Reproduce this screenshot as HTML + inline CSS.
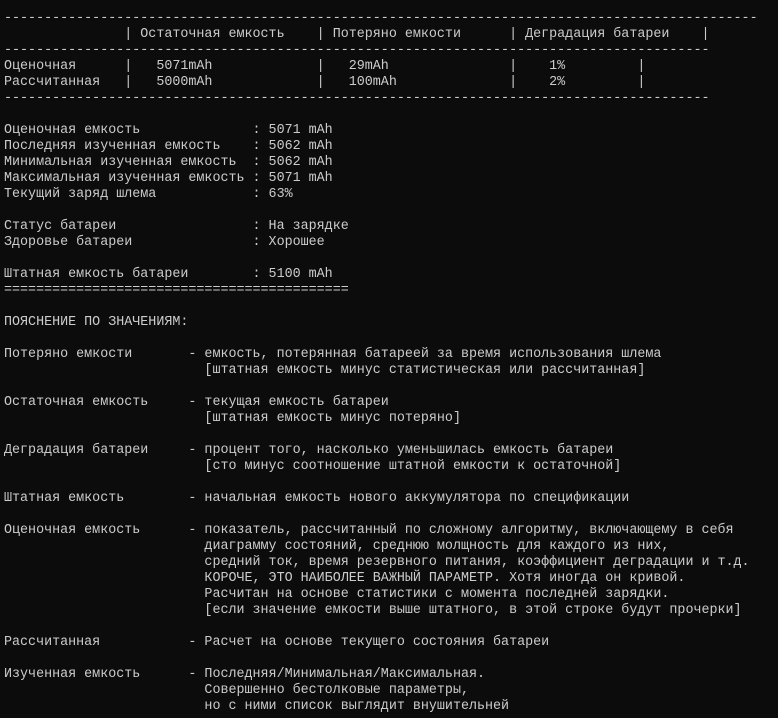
<!DOCTYPE html>
<html><head><meta charset="utf-8"><style>
html,body{margin:0;padding:0;background:#0c0c0c;width:778px;height:718px;overflow:hidden}
pre{margin:0;padding:11px 0 0 4px;font-family:"Liberation Mono","DejaVu Sans Mono",monospace;font-size:13.37px;line-height:16px;color:#cccccc;white-space:pre}
</style></head><body><pre>----------------------------------------------------------------------------------------------
               | Остаточная емкость    | Потеряно емкости      | Деградация батареи    |
----------------------------------------------------------------------------------------
Оценочная      |   5071mAh             |   29mAh               |    1%         |
Рассчитанная   |   5000mAh             |   100mAh              |    2%         |
----------------------------------------------------------------------------------------

Оценочная емкость              : 5071 mAh
Последняя изученная емкость    : 5062 mAh
Минимальная изученная емкость  : 5062 mAh
Максимальная изученная емкость : 5071 mAh
Текущий заряд шлема            : 63%

Статус батареи                 : На зарядке
Здоровье батареи               : Хорошее

Штатная емкость батареи        : 5100 mAh
===========================================

ПОЯСНЕНИЕ ПО ЗНАЧЕНИЯМ:

Потеряно емкости       - емкость, потерянная батареей за время использования шлема
                         [штатная емкость минус статистическая или рассчитанная]

Остаточная емкость     - текущая емкость батареи
                         [штатная емкость минус потеряно]

Деградация батареи     - процент того, насколько уменьшилась емкость батареи
                         [сто минус соотношение штатной емкости к остаточной]

Штатная емкость        - начальная емкость нового аккумулятора по спецификации

Оценочная емкость      - показатель, рассчитанный по сложному алгоритму, включающему в себя
                         диаграмму состояний, среднюю молщность для каждого из них,
                         средний ток, время резервного питания, коэффициент деградации и т.д.
                         КОРОЧЕ, ЭТО НАИБОЛЕЕ ВАЖНЫЙ ПАРАМЕТР. Хотя иногда он кривой.
                         Расчитан на основе статистики с момента последней зарядки.
                         [если значение емкости выше штатного, в этой строке будут прочерки]

Рассчитанная           - Расчет на основе текущего состояния батареи

Изученная емкость      - Последняя/Минимальная/Максимальная.
                         Совершенно бестолковые параметры,
                         но с ними список выглядит внушительней</pre></body></html>
